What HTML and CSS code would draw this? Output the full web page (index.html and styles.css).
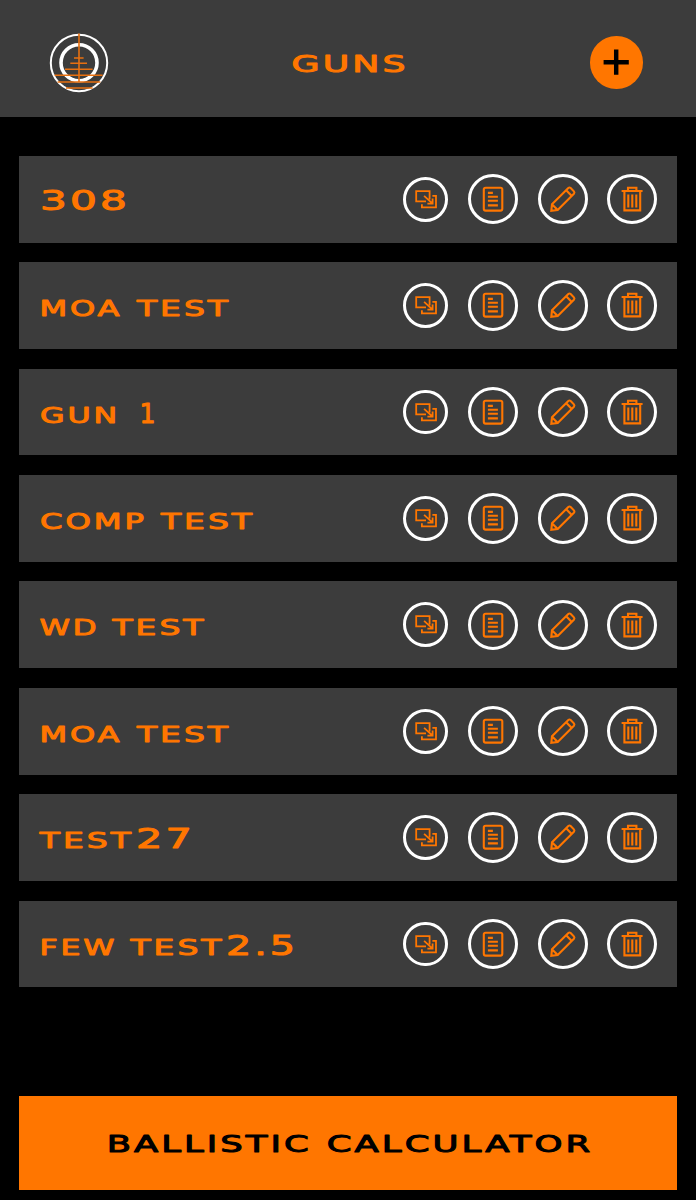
FILE: index.html
```html
<!DOCTYPE html>
<html lang="en">
<head>
  <meta charset="UTF-8">
  <meta name="viewport" content="width=device-width, initial-scale=1.0">
  <title>Guns</title>
  <link rel="stylesheet" href="styles.css">
</head>
<body>

  <header class="header">
    <svg class="logo" viewBox="0 0 60 60">
      <circle cx="30" cy="30" r="28.2" stroke-width="2"/>
      <circle cx="30" cy="29.8" r="18" stroke-width="3.6"/>
      <path d="M30 .6V48.5M25 25h9.6M21.3 30.3H38M16 36.3h27.6M5.6 42.3h48M8.6 49h42.7M17 55h26.6"/>
    </svg>
    <svg class="title" viewBox="0 0 120 40">
      <text x="1.5" y="29.3" textLength="117" lengthAdjust="spacingAndGlyphs">GUNS</text>
    </svg>
    <button class="addBtn" aria-label="Add gun">
      <svg viewBox="0 0 52 52"><path d="M26 13.5v25M13.5 26h25"/></svg>
    </button>
  </header>

  <main class="list"></main>

  <footer class="footer">
    <button class="calcBtn">
      <svg viewBox="0 0 657 94">
        <text x="87.5" y="55.8" textLength="205" lengthAdjust="spacingAndGlyphs">BALLISTIC</text>
        <text x="307.5" y="55.8" textLength="266.5" lengthAdjust="spacingAndGlyphs">CALCULATOR</text>
      </svg>
    </button>
  </footer>

  <svg class="sprite">
    <symbol id="copy" viewBox="0 0 44.8 44.8">
      <path d="M23 24.4h-9.8V14.1h13.4v8.4M29.4 18.9H33v11.4H18.9v-3M21.1 18.8l8.2 7.6M29.6 21.4v5.3h-5.2"/>
    </symbol>
    <symbol id="notes" viewBox="0 0 50.4 50.4">
      <rect x="15.8" y="13.8" width="18.5" height="22.8" rx="1.8"/>
      <path d="M19.9 18.9h5M19.9 22.8h10M19.9 26.8h10M19.9 31.4h10"/>
    </symbol>
    <symbol id="edit" viewBox="0 0 50.4 50.4">
      <path d="M13.3 36.9l.7-6.6L30.3 14q1.2-1 2.4 0l3.2 3.4q1 1.2 0 2.4L19.7 36.1zM28.2 16.2l5.6 5.8M14.2 30.5l5.5 5.6"/>
    </symbol>
    <symbol id="trash" viewBox="0 0 50.4 50.4">
      <path d="M14.6 17h21M21 17v-3.2h8.4V17M17.4 17v19.4h15.8V17M21.3 20.6v13M25.3 20.6v13M29.3 20.6v13"/>
    </symbol>
  </svg>

  <script>

  // each word: text, x, width, and whether it is set in full-size figures
  const guns = [
    [['308', 21, 90, true]],
    [['MOA', 20.5, 83], ['TEST', 118, 94]],
    [['GUN', 21, 80], ['1', 120.5, 18, true]],
    [['COMP', 21, 107], ['TEST', 142, 94]],
    [['WD', 20.5, 60], ['TEST', 93.5, 94]],
    [['MOA', 20.5, 83], ['TEST', 118, 94]],
    [['TEST', 20.8, 94], ['27', 117, 59, true]],
    [['FEW', 20.5, 78], ['TEST', 111.5, 94], ['2.5', 207, 72, true]]
  ];

  const icons = ['copy', 'notes', 'edit', 'trash'];
  const list = document.querySelector('.list');

  guns.forEach((words) => {
    const name = words.map(([text, x, width, figures]) =>
      `<text class="${figures ? 'figures' : 'caps'}" x="${x}" y="54.3" textLength="${width}" lengthAdjust="spacingAndGlyphs">${text}</text>`
    ).join('');

    const buttons = icons.map((icon) =>
      `<button class="iconBtn ${icon}" aria-label="${icon}"><svg><use href="#${icon}"/></svg></button>`
    ).join('');

    list.innerHTML += `<div class="gun"><svg class="name" viewBox="0 0 300 86.8">${name}</svg><div class="buttons">${buttons}</div></div>`;
  });

  </script>
</body>
</html>
```
FILE: styles.css
```css
*{
  box-sizing: border-box;
}

body{
  margin:0;
  height:1200px;
  display:flex;
  flex-direction: column;
  background-color: #000;
  font-family: "DejaVu Sans", sans-serif;
}

svg{
  display:block;
  fill:none;
}

button{
  padding:0;
  border:none;
  background:none;
  font-family: inherit;
}

text{
  letter-spacing: 2px;
  fill:#ff7600;
  stroke:#ff7600;
  stroke-width:1px;
  stroke-linejoin: round;
}

.header{
  display:flex;
  align-items: center;
  justify-content: space-between;
  height:116.7px;
  padding:8.5px 53.4px 0 49.2px;
  background-color: #3c3c3c;
}

.logo{
  width:60px;
  height:60px;
  stroke:#fff;
}

.logo path{
  stroke:#e87010;
  stroke-width:1.6;
}

.title{
  width:120px;
  height:40px;
  font-size:23.5px;
}

.addBtn{
  width:52.4px;
  height:52.4px;
  border-radius: 50%;
  background-color: #ff7600;
}

.addBtn path{
  stroke:#000;
  stroke-width:4.4;
}

.list{
  display:flex;
  flex-direction: column;
  gap:19.6px;
  padding:39.1px 19.3px 0;
}

.gun{
  display:flex;
  justify-content: space-between;
  align-items: center;
  height:86.8px;
  padding-right:19.3px;
  background-color: #3c3c3c;
}

.name{
  width:300px;
  height:86.8px;
}

.caps{
  font-size:22px;
}

.figures{
  font-size:26.5px;
}

.buttons{
  display:flex;
  align-items: center;
  gap:19.1px;
}

.iconBtn{
  width:50.4px;
  height:50.4px;
  border:3px solid #fff;
  border-radius: 50%;
}

.iconBtn svg{
  width:50.4px;
  height:50.4px;
  margin:-3px;
  stroke:#ff7600;
  stroke-width:2.1;
}

.iconBtn.copy,
.iconBtn.copy svg{
  width:44.8px;
  height:44.8px;
}

.iconBtn.copy{
  margin-right:1.2px;
}

.iconBtn.copy svg{
  stroke-width:1.8;
}

.footer{
  margin-top:auto;
  padding:0 19.3px 10.3px;
}

.calcBtn{
  display:block;
  width:100%;
  height:94.2px;
  background-color: #ff7600;
}

.calcBtn svg{
  width:100%;
  height:94px;
  font-size:23.5px;
}

.calcBtn text{
  fill:#000;
  stroke:#000;
}

.sprite{
  display:none;
}
```
